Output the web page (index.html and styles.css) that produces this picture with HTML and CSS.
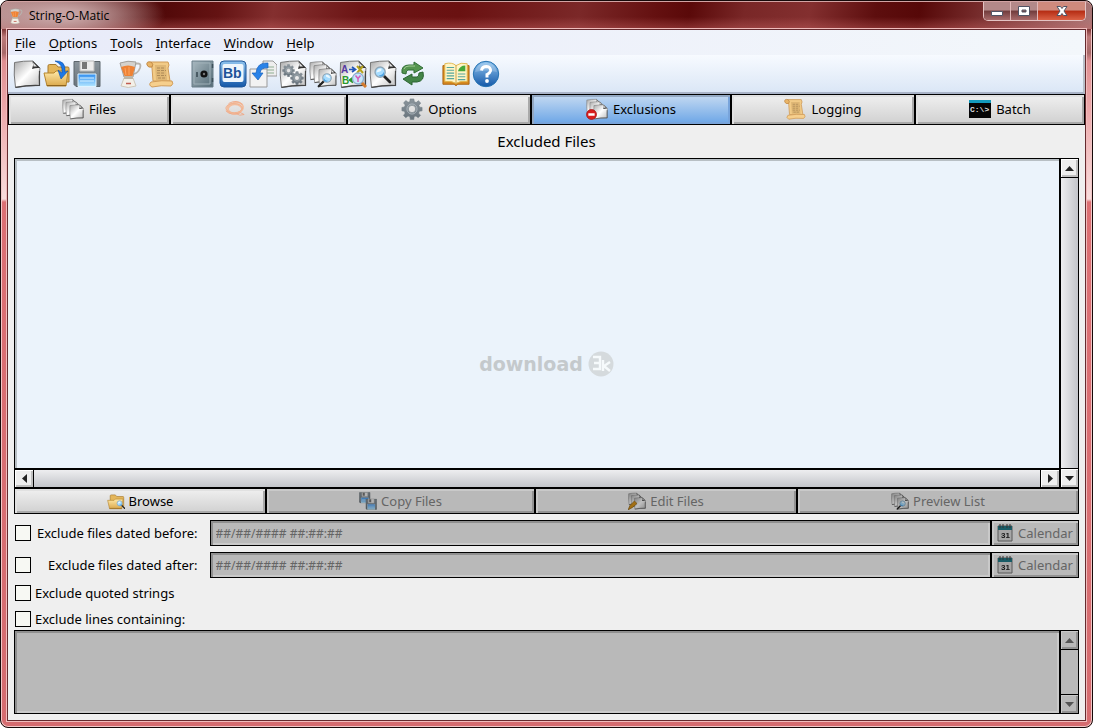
FILE: index.html
```html
<!DOCTYPE html>
<html lang="en">
<head>
  <meta charset="utf-8">
  <title>String-O-Matic</title>
  <link rel="stylesheet" href="styles.css">
</head>
<body>
  <!-- shared icons -->
  <svg class="sprite" aria-hidden="true">
    <defs>
      <linearGradient id="paper" x1="0" y1="0" x2="1" y2="1"><stop offset="0" stop-color="#a8a8a8"/><stop offset=".5" stop-color="#fff"/><stop offset="1" stop-color="#bcbcbc"/></linearGradient>
      <linearGradient id="gold" x1="0" y1="0" x2="0" y2="1"><stop offset="0" stop-color="#ffe9a8"/><stop offset="1" stop-color="#dba94c"/></linearGradient>
      <linearGradient id="metal" x1="0" y1="0" x2="1" y2="1"><stop offset="0" stop-color="#a9b9c0"/><stop offset="1" stop-color="#536a75"/></linearGradient>
      <linearGradient id="blue" x1="0" y1="0" x2="0" y2="1"><stop offset="0" stop-color="#8fc3ee"/><stop offset="1" stop-color="#1458a8"/></linearGradient>
      <linearGradient id="steel" x1="0" y1="0" x2="0" y2="1"><stop offset="0" stop-color="#8b959c"/><stop offset="1" stop-color="#68737c"/></linearGradient>
      <linearGradient id="water" x1="0" y1="0" x2="0" y2="1"><stop offset="0" stop-color="#2f8df0"/><stop offset="1" stop-color="#b4e6ff"/></linearGradient>
    </defs>
    <symbol id="page" viewBox="0 0 28 28">
      <path d="M1.500 2.500Q10 .8 20 1L27 8Q25.500 17 26.500 25.500Q13 25.500 2.500 27.500Q.5 15 1.500 2.500z" fill="url(#paper)" stroke="#777" stroke-width="1"/>
      <path d="M19.500 1Q21 5 19 9Q23 7.500 27 8z" fill="#333"/>
      <path d="M20 2.500L20.500 6.500L24 6.500z" fill="#e8e8e8"/>
      <path d="M2.500 27.300Q15 25 26.500 25.500V11" fill="none" stroke="#444" stroke-width="1.200"/>
    </symbol>
    <symbol id="pages" viewBox="0 0 28 28">
      <use href="#page" x="0" y="0" width="19" height="21"/>
      <use href="#page" x="4" y="3" width="19" height="21"/>
      <use href="#page" x="9" y="7" width="19" height="21"/>
    </symbol>
    <symbol id="lens" viewBox="0 0 28 28">
      <path d="M15 15L25 25" stroke="#222" stroke-width="4" stroke-linecap="round"/>
      <circle cx="10.500" cy="10.500" r="7.500" fill="#a6dcff" stroke="#8fa5b5" stroke-width="2"/>
      <path d="M5 11Q6 5 12 5Q15 9 5 11z" fill="#eaf8ff"/>
      <path d="M8 15Q14 16 16 10Q18 17 11 17z" fill="#4fa5e5"/>
    </symbol>
    <symbol id="folder" viewBox="0 0 28 28">
      <path d="M5 22V6Q5 4.500 6.500 4.500H13L15 7H25Q26 7 26 8.500V22z" fill="#e4b65a" stroke="#a87a2c"/>
      <path d="M1 13H11L13 11H25L23 26H4z" fill="url(#gold)" stroke="#b5852f"/>
      <path d="M4 25.500H23" stroke="#8e641d"/>
    </symbol>
    <symbol id="open" viewBox="0 0 28 28">
      <use href="#folder" width="28" height="28"/>
      <path d="M12 1Q23 0 22 12L25 11L18 19L15 10L19 13Q20 4 12 1z" fill="#1c78e8" stroke="#1150a6" stroke-width=".6"/>
    </symbol>
    <symbol id="disk" viewBox="0 0 28 28">
      <path d="M1 1.500H27V26.500H3L1 24.500z" fill="url(#steel)" stroke="#5d666c"/>
      <path d="M7 1H21V11H7z" fill="#ececec" stroke="#bbb"/>
      <path d="M9 2H14V9H9z" fill="#777"/>
      <path d="M5 14H23V26.500H5z" fill="url(#water)" stroke="#dff4ff"/>
      <path d="M7 18H21M7 21H21" stroke="#d7f1ff"/>
    </symbol>
    <symbol id="blender" viewBox="0 0 28 28">
      <path d="M19 4Q26 2 24 8Q22 13 18 14" fill="none" stroke="#b8b4ae" stroke-width="1.800"/>
      <path d="M4 3Q12 0 20 2L17 17H8z" fill="#d5d2cd" stroke="#a29e98"/>
      <path d="M5 7Q12 4 19 7L16.500 16H8.500z" fill="#ee8235"/>
      <path d="M9 8L10 15M13 7V15" stroke="#ffa45f"/>
      <path d="M8 18H17L20 26Q12 29 5 26z" fill="#f3f0e8" stroke="#ccc6b9"/>
      <path d="M8 16.500H17V19H8z" fill="#bdb5a6"/>
      <path d="M10 23.500H15" stroke="#c05c50" stroke-width="1.500"/>
    </symbol>
    <symbol id="scroll" viewBox="0 0 28 28">
      <path d="M5 2H22Q24 5 22 8L24 21H7L6 8z" fill="#f2cb87" stroke="#d09c59"/>
      <path d="M9 5H20L21 20H10z" fill="#dfb775"/>
      <path d="M11 8H19M11 10.500H20M11 13H18M11 15.500H20M12 18H19" stroke="#a98755" stroke-width=".9" stroke-dasharray="3 1"/>
      <path d="M5 2Q0 1 1 5Q2 8 6 7Q8 4 5 2z" fill="#e9b568" stroke="#c28a47"/>
      <path d="M5 22Q16 20 26 21Q28 24 25 26Q15 25 6 27Q2 25 5 22z" fill="#f6cf8d" stroke="#d09c59"/>
    </symbol>
    <symbol id="safe" viewBox="0 0 28 28">
      <path d="M3 1H24V27H3z" fill="url(#metal)" stroke="#697d87"/>
      <path d="M5 3H21V24H5z" fill="none" stroke="#9fb0b8"/>
      <circle cx="15" cy="14" r="3.600" fill="#111"/>
      <circle cx="15" cy="14" r="1.200" fill="#777"/>
      <path d="M8 12V17" stroke="#36474f" stroke-width="1.500"/>
      <path d="M23.500 4V8M23.500 18V22" stroke="#3e505a" stroke-width="1.500"/>
    </symbol>
    <symbol id="import" viewBox="0 0 28 28">
      <path d="M14 1H24L28 5V16H14z" fill="#eee" stroke="#999"/>
      <path d="M17 7H25M17 10H25M17 13H25" stroke="#8fae92"/>
      <path d="M1 9H18V27H1z" fill="#f2f2f2" stroke="#999"/>
      <path d="M19 3Q8 2 7 13H3L9 20L14 13H11Q12 7 19 8z" fill="#2a83e8" stroke="#1961bb" stroke-width=".7"/>
    </symbol>
    <symbol id="gear" viewBox="0 0 24 24">
      <path d="M10 1H14L14.500 4L16.500 5L19 3L21.500 5.500L19.500 8L20.300 10L23 10.300V14L20 14.500L19.300 16.500L21.300 19L18.700 21.500L16.300 19.700L14.300 20.500L14 23.500H10.200L9.700 20.500L7.700 19.700L5.200 21.500L2.700 19L4.500 16.500L3.700 14.500L1 14V10.300L3.800 9.800L4.600 7.700L2.800 5.300L5.400 2.800L7.700 4.700L9.600 4zM12 8A4 4 0 1 0 12 16A4 4 0 1 0 12 8z" fill="url(#steel)" fill-rule="evenodd" stroke="#6d7a83" stroke-width=".6"/>
      <circle cx="12" cy="12" r="5.500" fill="none" stroke="#aeb8be"/>
    </symbol>
    <symbol id="gears" viewBox="0 0 28 28">
      <use href="#page" width="28" height="28"/>
      <use href="#gear" x="3" y="4" width="13" height="13"/>
      <use href="#gear" x="11" y="11" width="14" height="14"/>
    </symbol>
    <symbol id="pages-find" viewBox="0 0 28 28">
      <use href="#pages" width="28" height="28"/>
      <g transform="translate(24 12) scale(-1 1)"><use href="#lens" width="16" height="16"/></g>
    </symbol>
    <symbol id="page-find" viewBox="0 0 28 28">
      <use href="#page" width="28" height="28"/>
      <use href="#lens" x="4" y="5" width="19" height="19"/>
    </symbol>
    <symbol id="refresh" viewBox="0 0 28 28">
      <path d="M3 13Q2 5 10 5H15V2L24 8L15 13V10H9Q7 10 7 14z" fill="#55954f" stroke="#2f6d35"/>
      <path d="M24 12Q26 21 18 22H13V25L4 19L13 14V17H18Q20 17 20 13z" fill="#438447" stroke="#2c6532"/>
      <path d="M5 9Q6 6 10 6H16" fill="none" stroke="#a3cd95"/>
    </symbol>
    <symbol id="book" viewBox="0 0 30 28">
      <path d="M1 5H29V25H17L15 26.500L13 25H1z" fill="#d8891f" stroke="#a96310"/>
      <path d="M3 3Q11 1 15 5Q20 1 27 3V22Q20 21 15 24Q10 21 3 22z" fill="#fff5c6" stroke="#e0b64e"/>
      <path d="M5 7H13M5 10H13M5 13H13M5 16H13M5 19H13M17 14H25M17 17H25M17 20H25" stroke="#56a59c" stroke-width="1.200"/>
      <path d="M17 11Q19 5 25 5V11z" fill="#45a83b"/>
      <path d="M15 5V24" stroke="#c59a42"/>
    </symbol>
    <symbol id="help" viewBox="0 0 28 28">
      <circle cx="14" cy="14" r="12.700" fill="url(#blue)" stroke="#2673b2"/>
      <path d="M3 12Q5 3 14 3Q23 3 25 12Q14 9 3 12z" fill="#fff" opacity=".2"/>
      <path d="M9.500 10.500Q10 6.500 14.500 6.500Q19 7 18.500 11Q18 13 15 14.500V17.500" fill="none" stroke="#fff" stroke-width="3"/>
      <circle cx="15" cy="21" r="1.900" fill="#fff"/>
    </symbol>
    <symbol id="string" viewBox="0 0 24 24">
      <g fill="none" stroke="#f3bd9d" stroke-width="1.800">
        <ellipse cx="12" cy="11" rx="9" ry="6" transform="rotate(-12 12 11)"/>
        <ellipse cx="12" cy="12" rx="7.500" ry="5"/>
        <ellipse cx="11" cy="11" rx="9" ry="5" stroke="#f0b08d" stroke-width="1"/>
        <path d="M5 6Q14 1 20 7M2 14Q8 20 18 16L22 18Q17 20 13 17" stroke="#efa987" stroke-width="1"/>
      </g>
    </symbol>
    <symbol id="exclude" viewBox="0 0 28 28">
      <use href="#pages" width="28" height="28"/>
      <circle cx="7" cy="21" r="6.300" fill="#d91e1e" stroke="#a71111"/>
      <path d="M3 21H11" stroke="#fff" stroke-width="3"/>
    </symbol>
    <symbol id="browse" viewBox="0 0 28 28">
      <use href="#folder" width="28" height="28"/>
      <use href="#lens" x="14" y="12" width="15" height="15"/>
    </symbol>
    <symbol id="copy" viewBox="0 0 28 28">
      <use href="#disk" width="18" height="18"/>
      <use href="#disk" x="10" y="10" width="18" height="18"/>
    </symbol>
    <symbol id="edit" viewBox="0 0 28 28">
      <use href="#pages" width="28" height="28"/>
      <path d="M0 28L3 21L10 14L14 18L7 24z" fill="#d8941a" stroke="#866015"/>
    </symbol>
  </svg>

  <div class="window">
    <header class="titlebar">
      <svg class="app-icon"><use href="#blender"/></svg>
      <span class="title">String-O-Matic</span>
      <div class="window-buttons">
        <button aria-label="Minimize"><svg viewBox="0 0 14 14"><path d="M1.500 7.500H12.500V11.500H1.500z" fill="#fff" stroke="#505465"/></svg></button>
        <button aria-label="Maximize"><svg viewBox="0 0 14 14"><path d="M1.500 2.500H12.500V11.500H1.500zM5 6H9V8H5z" fill="#fff" fill-rule="evenodd" stroke="#505465"/></svg></button>
        <button class="close" aria-label="Close"><svg viewBox="0 0 14 14"><path d="M2 2.500H5.500L7 4.500L8.500 2.500H12L9 7L12 11.500H8.500L7 9.500L5.500 11.500H2L5 7z" fill="#fff" stroke="#505465"/></svg></button>
      </div>
    </header>

    <main class="client">
      <nav class="menu">
        <button><u>F</u>ile</button>
        <button><u>O</u>ptions</button>
        <button><u>T</u>ools</button>
        <button><u>I</u>nterface</button>
        <button><u>W</u>indow</button>
        <button><u>H</u>elp</button>
      </nav>

      <div class="toolbar">
        <div class="tool-group">
          <button aria-label="New"><svg><use href="#page"/></svg></button>
          <button aria-label="Open"><svg><use href="#open"/></svg></button>
          <button aria-label="Save"><svg><use href="#disk"/></svg></button>
        </div>
        <div class="tool-group">
          <button aria-label="Process"><svg><use href="#blender"/></svg></button>
          <button aria-label="Log"><svg><use href="#scroll"/></svg></button>
        </div>
        <div class="tool-group">
          <button aria-label="Backup"><svg><use href="#safe"/></svg></button>
          <button aria-label="Change case">
            <svg viewBox="0 0 28 28">
              <rect x="1" y="1" width="26" height="26" rx="4" fill="url(#blue)" stroke="#1e5698"/>
              <rect x="3.500" y="4" width="21" height="18" rx="2" fill="#eef6fc"/>
              <text x="4" y="18" class="icon-bb">Bb</text>
            </svg>
          </button>
          <button aria-label="Import"><svg><use href="#import"/></svg></button>
          <button aria-label="Batch"><svg><use href="#gears"/></svg></button>
          <button aria-label="Find files"><svg><use href="#pages-find"/></svg></button>
          <button aria-label="Replace">
            <svg viewBox="0 0 28 28">
              <use href="#page" width="28" height="28"/>
              <text x="2" y="13" class="icon-letter purple">A</text>
              <text x="3" y="24" class="icon-letter green">B</text>
              <path d="M10 9.500H16M13 7L16.500 9.500L13 12" fill="none" stroke="#2457b8" stroke-width="1.700"/>
              <path d="M17 20H11M14 17.500L10.500 20L14 22.500" fill="none" stroke="#2b982b" stroke-width="1.700"/>
              <path d="M18 6L24 13M24 6L18 13" stroke="#b5a31e" stroke-width="2"/>
              <path d="M22 22L27 27" stroke="#d47b2d" stroke-width="3"/>
              <circle cx="19" cy="18.500" r="5.500" fill="#c7e7fb" stroke="#8bafd0" stroke-width="1.300"/>
              <path d="M16.500 15.500L19 18.500L21.500 15.500M19 18V22" fill="none" stroke="#d55fba" stroke-width="1.500"/>
            </svg>
          </button>
          <button aria-label="Preview"><svg><use href="#page-find"/></svg></button>
          <button aria-label="Refresh"><svg><use href="#refresh"/></svg></button>
        </div>
        <div class="tool-group">
          <button aria-label="Manual"><svg><use href="#book"/></svg></button>
          <button aria-label="Help"><svg><use href="#help"/></svg></button>
        </div>
      </div>

      <nav class="tabs">
        <button class="btn"><svg><use href="#pages"/></svg>Files</button>
        <button class="btn"><svg><use href="#string"/></svg>Strings</button>
        <button class="btn"><svg><use href="#gear"/></svg>Options</button>
        <button class="btn active"><svg><use href="#exclude"/></svg>Exclusions</button>
        <button class="btn"><svg><use href="#scroll"/></svg>Logging</button>
        <button class="btn">
          <svg viewBox="0 0 22 18">
            <path d="M0 0H22V18H0z" fill="#050505"/>
            <path d="M0 0H22V3H0z" fill="#139bbd"/>
            <text x="1" y="12" class="icon-console">C:\&gt;</text>
          </svg>
          Batch
        </button>
      </nav>

      <section class="panel">
        <h1>Excluded Files</h1>

        <div class="file-list">
          <div class="list-body"></div>
          <div class="scrollbar vertical">
            <button aria-label="Scroll up"><svg viewBox="0 0 9 9"><path d="M0 7L4.500 2L9 7z"/></svg></button>
            <div class="thumb"></div>
            <button aria-label="Scroll down"><svg viewBox="0 0 9 9"><path d="M0 2L4.500 7L9 2z"/></svg></button>
          </div>
          <div class="scrollbar horizontal">
            <button aria-label="Scroll left"><svg viewBox="0 0 9 9"><path d="M7 0L2 4.500L7 9z"/></svg></button>
            <div class="thumb"></div>
            <button aria-label="Scroll right"><svg viewBox="0 0 9 9"><path d="M2 0L7 4.500L2 9z"/></svg></button>
          </div>
        </div>

        <div class="actions">
          <button class="btn"><svg><use href="#browse"/></svg>Browse</button>
          <button class="btn" disabled><svg><use href="#copy"/></svg>Copy Files</button>
          <button class="btn" disabled><svg><use href="#edit"/></svg>Edit Files</button>
          <button class="btn" disabled><svg><use href="#pages-find"/></svg>Preview List</button>
        </div>

        <div class="dates">
          <input type="checkbox" id="before">
          <label for="before">Exclude files dated before:</label>
          <input type="text" class="field" aria-label="Before date" value="##/##/#### ##:##:##" disabled>
          <button class="btn calendar" disabled>
            <svg viewBox="0 0 16 18">
              <path d="M1 2H15V17H1z" fill="#ddd" stroke="#777"/>
              <path d="M1 2H15V6H1z" fill="#217a88"/>
              <path d="M3 0V4M6 0V4M10 0V4M13 0V4" stroke="#444"/>
              <text x="4" y="14" class="icon-date">31</text>
            </svg>
            Calendar
          </button>

          <input type="checkbox" id="after">
          <label for="after">Exclude files dated after:</label>
          <input type="text" class="field" aria-label="After date" value="##/##/#### ##:##:##" disabled>
          <button class="btn calendar" disabled>
            <svg viewBox="0 0 16 18">
              <path d="M1 2H15V17H1z" fill="#ddd" stroke="#777"/>
              <path d="M1 2H15V6H1z" fill="#217a88"/>
              <path d="M3 0V4M6 0V4M10 0V4M13 0V4" stroke="#444"/>
              <text x="4" y="14" class="icon-date">31</text>
            </svg>
            Calendar
          </button>
        </div>

        <div class="checks">
          <div class="check">
            <input type="checkbox" id="quoted">
            <label for="quoted">Exclude quoted strings</label>
          </div>
          <div class="check">
            <input type="checkbox" id="lines">
            <label for="lines">Exclude lines containing:</label>
          </div>
        </div>

        <div class="lines">
          <textarea class="field" aria-label="Lines to exclude" disabled></textarea>
          <div class="scrollbar vertical off">
            <button aria-label="Scroll up" disabled><svg viewBox="0 0 9 9"><path d="M0 7L4.500 2L9 7z"/></svg></button>
            <div class="thumb"></div>
            <button aria-label="Scroll down" disabled><svg viewBox="0 0 9 9"><path d="M0 2L4.500 7L9 2z"/></svg></button>
          </div>
        </div>
      </section>
    </main>

    <div class="watermark">
      <span>download</span>
      <svg viewBox="0 0 26 26"><circle cx="13" cy="13" r="12.500" fill="#d5dadd"/><path d="M5 6H12V18H5M6 12H12M15 9V20M22 11L16 15L22 20" fill="none" stroke="#f6fafc" stroke-width="2.400"/></svg>
    </div>
  </div>
</body>
</html>
```
FILE: styles.css
```css
* {
  box-sizing: border-box;
}

body {
  margin: 0;
  background-color: #fff;
  color: #000;
  font-family: "Noto Sans", "Open Sans", sans-serif;
  font-size: 13px;
  line-height: 18px;
}

button,
input,
textarea {
  margin: 0;
  font: inherit;
  color: inherit;
  border-radius: 0;
}

button {
  display: flex;
  align-items: center;
  justify-content: center;
  padding: 0;
  border: none;
  background: none;
}

.sprite {
  position: absolute;
  width: 0;
  height: 0;
}

/* window frame */
.window {
  position: relative;
  display: flex;
  flex-direction: column;
  height: 100vh;
  padding: 0 6px 6px;
  overflow: hidden;
  border: 1px solid #160909;
  border-radius: 8px;
  background: linear-gradient(#7e3535 28px, #bd7a7a 36px, #a66868 52px, #df8f92 60px, #eda9ab 110px, #f8dcdc 198px, #dc7074 201px, #d56c70 100%);
  box-shadow: inset 0 0 0 1px #f1c8c8;
}

.titlebar {
  display: flex;
  align-items: center;
  height: 28px;
  margin: 0 -6px;
  padding: 0 6px 0 7px;
  border-top: 1px solid #d2a3a3;
  border-radius: 7px 7px 0 0;
  background:
    radial-gradient(ellipse 105px 30px at 60px 13px, #c5a1a1 20%, transparent),
    linear-gradient(transparent 55%, rgba(205, 105, 105, 0.4)),
    linear-gradient(100deg, #b18686 0, #784040 8%, #520909 15%, #641313 20%, #842f2f 25%, #6c1515 33%, #6a1111 42%, #7b2828 53%, #641010 60%, #5a0909 63%, #792727 68%, #832f2f 74%, #5d0e0e 80%, #560808 84%, #742929 89%, #a97878 100%);
}

.app-icon {
  width: 16px;
  height: 16px;
}

.title {
  margin-left: 5px;
  font-family: "Open Sans", sans-serif;
  font-size: 12px;
}

.window-buttons {
  display: flex;
  align-self: flex-start;
  margin-left: auto;
  height: 19px;
  border: 1px solid #e4c3c3;
  border-top: none;
  border-radius: 0 0 5px 5px;
  overflow: hidden;
}

.window-buttons button {
  width: 27px;
  border-right: 1px solid #e0b8b8;
  background: linear-gradient(#b38989 45%, #713c3c 50%, #a86b6b);
}

.window-buttons .close {
  width: 47px;
  border-right: none;
  background: linear-gradient(#cf8a7d 45%, #b52c13 50%, #db6246);
}

.window-buttons svg {
  width: 14px;
  height: 14px;
}

.client {
  display: flex;
  flex: 1;
  flex-direction: column;
  min-height: 0;
  border: 1px solid #652a2e;
  outline: 1px solid #f0bcbc;
  background-color: #efefef;
}

.menu {
  display: flex;
  gap: 13px;
  height: 25px;
  padding-left: 7px;
  background: linear-gradient(90deg, #e8ebf9, #f3f7fb);
}

.menu u {
  text-underline-offset: 2px;
}

.toolbar {
  display: flex;
  align-items: center;
  gap: 15px;
  height: 39px;
  padding-left: 5px;
  border-right: 2px solid #b8bfc8;
  border-bottom: 2px solid #aab4c8;
  background: linear-gradient(#f7faff, #dbe7f6);
}

.tool-group {
  display: flex;
  gap: 2px;
}

.tool-group svg {
  width: 28px;
  height: 28px;
}

/* bevelled push buttons */
.btn {
  gap: 5px;
  padding-bottom: 1px;
  border: 1px solid #000;
  background: linear-gradient(#f0f0f0, #d0d0d0);
  box-shadow: inset 2px 2px #e1e1e1, inset -2px -2px #a9a9a9;
}

.btn:disabled {
  background: #b9b9b9;
  color: #656565;
  box-shadow: inset 2px 2px #c9c9c9, inset -2px -2px #929292;
}

.btn:disabled svg {
  filter: brightness(0.75);
}

.tabs {
  display: grid;
  grid-template-columns: 162fr 177fr 184fr 200fr 184fr 170fr;
  height: 31px;
}

.tabs svg {
  width: 22px;
  height: 24px;
}

.tabs .active {
  background: linear-gradient(#c5daf2, #6ba5e6);
  box-shadow: inset 2px 2px #93a8c2, inset -2px -2px #78a4db;
}

.panel {
  display: flex;
  flex: 1;
  flex-direction: column;
  min-height: 0;
  padding: 0 6px 6px;
}

h1 {
  margin: 0;
  font-size: 15px;
  font-weight: normal;
  line-height: 33px;
  text-align: center;
}

.file-list {
  display: grid;
  flex: 1;
  grid-template-columns: 1fr 19px;
  grid-template-rows: 1fr 19px;
  min-height: 100px;
}

.list-body {
  border: 1px solid #000;
  background-color: #ebf3fb;
  box-shadow: inset 2px 2px #b8bfc4;
}

.scrollbar {
  display: flex;
  border: 1px solid #000;
}

.scrollbar.vertical {
  flex-direction: column;
}

.file-list .vertical {
  grid-column: 2;
  grid-row: 1 / 3;
}

.scrollbar button {
  flex: 0 0 18px;
  background-color: #eee;
  box-shadow: inset 1px 1px #fff, inset -2px -2px #c0c0c0;
}

.scrollbar button svg {
  width: 9px;
  height: 9px;
  fill: #222;
}

.scrollbar .thumb {
  flex: 1;
  background: linear-gradient(90deg, #eeeef0, #c3c5ca);
}

.vertical .thumb {
  border: solid #000;
  border-width: 1px 0;
}

.horizontal .thumb {
  border: solid #000;
  border-width: 0 1px;
  background: linear-gradient(#eeeef0, #c3c5ca);
}

.off button {
  background-color: #b9b9b9;
  box-shadow: inset 1px 1px #c9c9c9, inset -2px -2px #929292;
}

.off button svg {
  fill: #555;
}

.off .thumb {
  background: #b9b9b9;
}

.actions {
  display: grid;
  grid-template-columns: 252fr 269fr 262fr 282fr;
  height: 26px;
}

.actions .btn {
  gap: 4px;
}

.actions svg {
  width: 18px;
  height: 18px;
}

/* date filters and check boxes */
.dates {
  display: grid;
  grid-template-columns: 16px max-content 1fr 88px;
  grid-auto-rows: 26px;
  row-gap: 6px;
  align-items: center;
  padding: 6px 0 6px 1px;
}

.dates label {
  margin: 0 12px 0 6px;
  text-align: right;
}

input[type="checkbox"] {
  appearance: none;
  width: 16px;
  height: 16px;
  border: 1px solid #000;
  background-color: #f7f8f3;
}

input[type="checkbox"]:checked {
  background-color: #222;
}

.field {
  min-width: 0;
  height: 26px;
  padding: 0 5px;
  border: 1px solid #000;
  background-color: #b9b9b9;
  color: #656565;
  font-size: 12px;
  box-shadow: inset 2px 2px #909090, inset -2px -2px #c9c9c9;
}

.calendar {
  height: 26px;
}

.calendar svg {
  width: 16px;
  height: 18px;
}

.checks {
  display: grid;
  gap: 8px;
  padding-left: 1px;
}

.check {
  display: flex;
  align-items: center;
  gap: 4px;
}

.lines {
  display: grid;
  grid-template-columns: 1fr 19px;
  height: 84px;
  margin-top: 2px;
}

textarea.field {
  height: 84px;
  resize: none;
}

.watermark {
  position: absolute;
  inset: 0;
  display: flex;
  align-items: center;
  justify-content: center;
  gap: 5px;
  color: #c4c9cc;
  font-family: "DejaVu Sans", sans-serif;
  font-size: 19px;
  font-weight: bold;
  pointer-events: none;
}

.watermark svg {
  width: 26px;
  height: 26px;
}

/* lettering inside the icons */
.icon-bb {
  fill: #1d5398;
  font: bold 14px "Liberation Sans", sans-serif;
}

.icon-letter {
  font: bold 10px "Liberation Sans", sans-serif;
}

.purple {
  fill: #5638a0;
}

.green {
  fill: #2b982b;
}

.icon-console {
  fill: #ddd;
  font: bold 8px "Liberation Mono", monospace;
}

.icon-date {
  fill: #222;
  font: bold 8px "Liberation Sans", sans-serif;
}
```
